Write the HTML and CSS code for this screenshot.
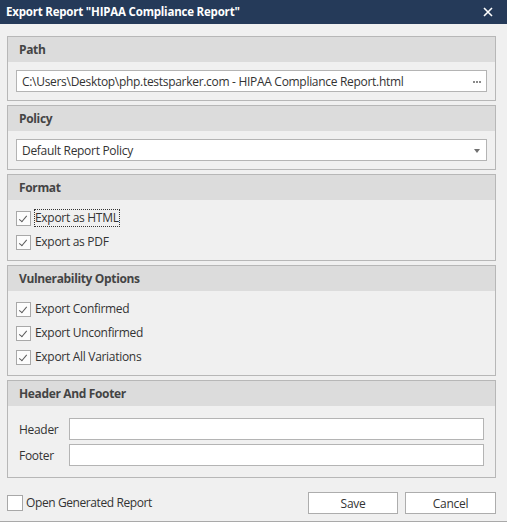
FILE: index.html
```html
<!DOCTYPE html>
<html>
<head>
<meta charset="utf-8">
<title>Export Report</title>
<link rel="stylesheet" href="styles.css">
</head>
<body>
<div class="dialog">
  <div class="titlebar">
    <span class="title">Export Report "HIPAA Compliance Report"</span>
    <svg class="close" width="10" height="10" viewBox="0 0 10 10"><path d="M1 1L9 9M9 1L1 9" stroke="#fff" stroke-width="1.6"/></svg>
  </div>
  <div class="content">
    <section class="group">
      <div class="group-head">Path</div>
      <div class="group-body">
        <div class="field">
          <span class="field-text">C:\Users\Desktop\php.testsparker.com - HIPAA Compliance Report.html</span>
          <svg class="dots" width="8" height="2" viewBox="0 0 8 2"><rect x="0" y="0" width="2" height="2" fill="#8a8a8a"/><rect x="3" y="0" width="2" height="2" fill="#8a8a8a"/><rect x="6" y="0" width="2" height="2" fill="#8a8a8a"/></svg>
        </div>
      </div>
    </section>
    <section class="group">
      <div class="group-head">Policy</div>
      <div class="group-body">
        <div class="field">
          <span class="field-text">Default Report Policy</span>
          <svg class="arrow" width="6" height="4" viewBox="0 0 6 4"><path d="M0 0H6L3 4Z" fill="#707070"/></svg>
        </div>
      </div>
    </section>
    <section class="group">
      <div class="group-head">Format</div>
      <div class="group-body checks">
        <div class="check-row"><span class="cb checked"></span><span class="cb-label focus">Export as HTML</span></div>
        <div class="check-row"><span class="cb checked"></span><span class="cb-label">Export as PDF</span></div>
      </div>
    </section>
    <section class="group">
      <div class="group-head">Vulnerability Options</div>
      <div class="group-body checks">
        <div class="check-row"><span class="cb checked"></span><span class="cb-label">Export Confirmed</span></div>
        <div class="check-row"><span class="cb checked"></span><span class="cb-label">Export Unconfirmed</span></div>
        <div class="check-row"><span class="cb checked"></span><span class="cb-label">Export All Variations</span></div>
      </div>
    </section>
    <section class="group">
      <div class="group-head">Header And Footer</div>
      <div class="group-body hf">
        <span class="hf-label">Header</span><div class="field plain"></div>
        <span class="hf-label">Footer</span><div class="field plain"></div>
      </div>
    </section>
    <div class="footer">
      <div class="check-row open"><span class="cb white"></span><span class="cb-label">Open Generated Report</span></div>
      <div class="buttons">
        <button class="btn">Save</button>
        <button class="btn">Cancel</button>
      </div>
    </div>
  </div>
</div>
</body>
</html>
```
FILE: styles.css
```css
* { box-sizing: border-box; }
html, body { margin: 0; padding: 0; }
body {
  width: 507px;
  height: 522px;
  background: #f0f0f0;
  font-family: "Open Sans", "Noto Sans", sans-serif;
  font-size: 12px;
  color: #333;
  overflow: hidden;
}
.dialog {
  width: 507px;
  height: 522px;
  display: flex;
  flex-direction: column;
  background: #f0f0f0;
  border-bottom: 1px solid #a9a9a9;
}
.titlebar {
  height: 24px;
  flex: none;
  background: #253a59;
  display: flex;
  align-items: center;
  justify-content: space-between;
  padding: 0 14px 2px 6px;
}
.title {
  color: #fff;
  font-weight: 700;
  font-size: 11.5px;
  letter-spacing: -0.2px;
}
.close { display: block; margin-top: 1px; }
.content {
  flex: 1;
  display: flex;
  flex-direction: column;
  gap: 4px;
  padding: 12px 11px 0 7px;
}
.group {
  border: 1px solid #b7b7b7;
  background: #f0f0f0;
}
.group-head {
  height: 25px;
  background: #dcdcdc;
  font-weight: 700;
  color: #444;
  padding-left: 11px;
  display: flex;
  align-items: center;
  letter-spacing: -0.35px;
}
.group-body { padding: 8px 8px; }
.field {
  height: 22px;
  background: #fff;
  border: 1px solid #b4b4b4;
  display: flex;
  align-items: center;
  justify-content: space-between;
  padding: 0 5px 0 5px;
}
.field-text { color: #333; letter-spacing: -0.3px; white-space: nowrap; }
.dots { margin-top: 1px; }
.arrow { margin-right: 1px; margin-top: 1px; }
.checks { padding: 6px 8px; }
.check-row {
  height: 24px;
  display: flex;
  align-items: center;
}
.cb {
  width: 15px;
  height: 15px;
  border: 1px solid #a8a8a8;
  background: #fcfcfc;
  position: relative;
  flex: none;
}
.cb.checked::after {
  content: "";
  position: absolute;
  left: 4px;
  top: 2px;
  width: 3px;
  height: 7px;
  border-right: 1px solid #5a5a5a;
  border-bottom: 1px solid #5a5a5a;
  transform: rotate(40deg);
}
.cb.white { width: 16px; height: 16px; background: #fff; }
.cb-label {
  margin-left: 3px;
  padding: 0 0 0 0;
  line-height: 16px;
  border: 1px solid transparent;
  color: #333;
  letter-spacing: -0.3px;
}
.cb-label.focus { border: 1px dotted #333; }
.hf {
  display: grid;
  grid-template-columns: 50px 1fr;
  row-gap: 4px;
  align-items: center;
  padding: 12px 11px 11px 11px;
}
.hf-label { color: #333; letter-spacing: -0.3px; }
.footer {
  margin-top: 9px;
  display: flex;
  align-items: center;
  justify-content: space-between;
}
.open .cb-label { margin-left: 2px; letter-spacing: -0.4px; }
.buttons { display: flex; gap: 7px; }
.btn {
  width: 90px;
  height: 22px;
  background: #fff;
  border: 1px solid #adadad;
  font-family: inherit;
  font-size: 12px;
  color: #333;
  padding: 0;
  letter-spacing: -0.3px;
}
.btn + .btn { width: 91px; }
```
